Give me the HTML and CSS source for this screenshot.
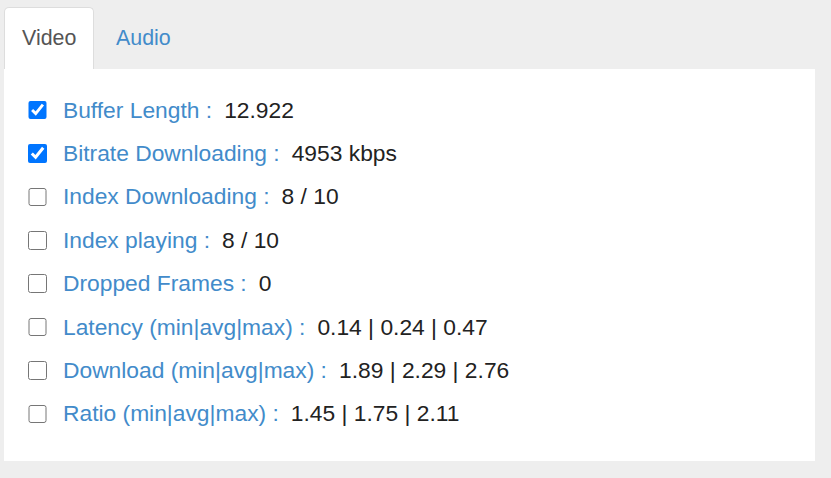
FILE: index.html
```html
<!DOCTYPE html>
<html lang="en">
<head>
<meta charset="utf-8">
<title>Metrics</title>
<link rel="stylesheet" href="styles.css">
</head>
<body>
<div class="wrap">
  <ul class="tabs">
    <li class="tab active">Video</li>
    <li class="tab">Audio</li>
  </ul>
  <div class="panel">
    <div class="row"><input type="checkbox" class="cb" checked><span class="label">Buffer Length :</span><span class="value">12.922</span></div>
    <div class="row"><input type="checkbox" class="cb" checked><span class="label">Bitrate Downloading :</span><span class="value">4953 kbps</span></div>
    <div class="row"><input type="checkbox" class="cb"><span class="label">Index Downloading :</span><span class="value">8 / 10</span></div>
    <div class="row"><input type="checkbox" class="cb"><span class="label">Index playing :</span><span class="value">8 / 10</span></div>
    <div class="row"><input type="checkbox" class="cb"><span class="label">Dropped Frames :</span><span class="value">0</span></div>
    <div class="row"><input type="checkbox" class="cb"><span class="label">Latency (min|avg|max) :</span><span class="value">0.14 | 0.24 | 0.47</span></div>
    <div class="row"><input type="checkbox" class="cb"><span class="label">Download (min|avg|max) :</span><span class="value">1.89 | 2.29 | 2.76</span></div>
    <div class="row"><input type="checkbox" class="cb"><span class="label">Ratio (min|avg|max) :</span><span class="value">1.45 | 1.75 | 2.11</span></div>
  </div>
</div>
</body>
</html>
```
FILE: styles.css
```css
html, body {
  margin: 0;
  padding: 0;
  background: #eeeeee;
  font-family: "Liberation Sans", Arial, sans-serif;
}
.wrap {
  padding: 7px 0 0 4px;
}
.tabs {
  list-style: none;
  margin: 0;
  padding: 0;
  display: flex;
  gap: 4px;
}
.tab {
  box-sizing: border-box;
  height: 62px;
  padding: 0 18px 0 17px;
  display: flex;
  align-items: center;
  font-size: 21.4px;
  color: #428bca;
  border: 1px solid transparent;
  border-bottom: none;
  border-radius: 5px 5px 0 0;
}
.tab.active {
  background: #ffffff;
  color: #555555;
  border-color: #dddddd;
  width: 90px;
}
.panel {
  width: 811px;
  height: 392px;
  box-sizing: border-box;
  background: #ffffff;
  padding: 26.5px 0 0 24px;
  display: flex;
  flex-direction: column;
  gap: 14.43px;
}
.row {
  display: flex;
  align-items: center;
  height: 29px;
  font-size: 22.8px;
  line-height: 29px;
}
.cb {
  width: 18.6px;
  height: 18.6px;
  margin: 0 16.4px 0 0;
  flex: none;
}
.label {
  color: #428bca;
}
.value {
  color: #222222;
  margin-left: 12px;
}
```
